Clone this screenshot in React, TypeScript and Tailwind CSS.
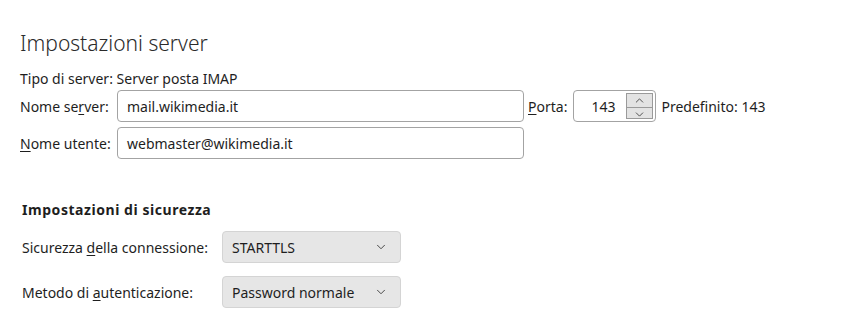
import { ChevronDown, ChevronUp } from 'lucide-react'

function Key({ children }: { children: string }) {
  return <span className="underline underline-offset-2 decoration-1">{children}</span>
}

function Select({ value }: { value: string }) {
  return (
    <div className="flex h-[32px] w-[179px] items-center justify-between rounded-[4px] border border-[#d4d4d4] bg-[#e6e6e6] pl-[9px] pr-[12px]">
      <span>{value}</span>
      <ChevronDown className="h-[14px] w-[14px] text-[#333]" strokeWidth={1.5} />
    </div>
  )
}

export default function App() {
  return (
    <div
      className="h-[325px] w-[867px] bg-white pl-5 pt-[28px] text-[14px] text-[#1e1e1e]"
      style={{ fontFamily: '"Noto Sans", "Open Sans", sans-serif' }}
    >
      <h1 className="text-[21px] font-light leading-[30px] text-[#2a2a2a]">Impostazioni server</h1>

      <div className="mt-[11px] leading-[20px]">Tipo di server: Server posta IMAP</div>

      <div className="mt-[1px] flex h-[32px] items-center">
        <label className="w-[97px]">
          Nome se<Key>r</Key>ver:
        </label>
        <div className="flex h-full w-[407px] items-center rounded-[4px] border border-[#a3a3a3] bg-white pl-[9px]">
          mail.wikimedia.it
        </div>
        <label className="ml-[4px] mr-[6px]">
          <Key>P</Key>orta:
        </label>
        <div className="flex h-full w-[83px] items-center rounded-[4px] border border-[#a3a3a3] bg-white pr-[2px]">
          <span className="flex-1 pr-[11px] text-right">143</span>
          <div className="flex h-[26px] w-[27px] flex-col border border-[#9a9a9a] bg-[#e3e3e3]">
            <div className="flex flex-1 items-center justify-center border-b border-[#9a9a9a]">
              <ChevronUp className="h-[13px] w-[13px] text-[#333]" strokeWidth={1.5} />
            </div>
            <div className="flex flex-1 items-center justify-center">
              <ChevronDown className="h-[13px] w-[13px] text-[#333]" strokeWidth={1.5} />
            </div>
          </div>
        </div>
        <span className="ml-[5px]">Predefinito: 143</span>
      </div>

      <div className="mt-[5px] flex h-[32px] items-center">
        <label className="w-[97px]">
          <Key>N</Key>ome utente:
        </label>
        <div className="flex h-full w-[407px] items-center rounded-[4px] border border-[#a3a3a3] bg-white pl-[9px]">
          webmaster@wikimedia.it
        </div>
      </div>

      <div className="pl-[2px]">
        <h2 className="mt-[41px] font-bold leading-[20px] tracking-[0.55px]">Impostazioni di sicurezza</h2>

        <div className="mt-[11px] flex items-center">
          <label className="w-[200px]">
            Sicurezza <Key>d</Key>ella connessione:
          </label>
          <Select value="STARTTLS" />
        </div>

        <div className="mt-[13px] flex items-center">
          <label className="w-[200px]">
            Metodo di <Key>a</Key>utenticazione:
          </label>
          <Select value="Password normale" />
        </div>
      </div>
    </div>
  )
}
